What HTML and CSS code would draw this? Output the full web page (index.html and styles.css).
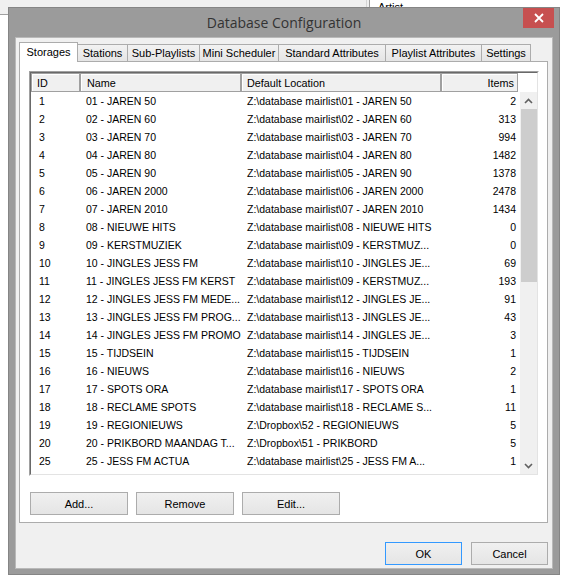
FILE: index.html
```html
<!DOCTYPE html>
<html>
<head>
<meta charset="utf-8">
<title>Database Configuration</title>
<link rel="stylesheet" href="styles.css">
</head>
<body>
<div class="app">
  <div class="app-head">
    <div class="app-left"></div>
    <div class="app-split"></div>
    <div class="app-right">Artist</div>
  </div>
</div>

<div class="window">
  <div class="titlebar">
    <span class="title">Database Configuration</span>
    <div class="close">
      <svg width="10" height="10" viewBox="0 0 10 10"><path d="M1 1 L9 9 M9 1 L1 9" stroke="#fff" stroke-width="1.8" fill="none"/></svg>
    </div>
  </div>
  <div class="client">
    <div class="tabs">
      <div class="tab active">Storages</div>
      <div class="tab">Stations</div>
      <div class="tab">Sub-Playlists</div>
      <div class="tab">Mini Scheduler</div>
      <div class="tab">Standard Attributes</div>
      <div class="tab">Playlist Attributes</div>
      <div class="tab">Settings</div>
    </div>
    <div class="panel">
      <div class="list">
        <div class="list-inner">
          <div class="list-head">
            <div class="hcell c-id">ID</div>
            <div class="hcell c-name">Name</div>
            <div class="hcell c-loc">Default Location</div>
            <div class="hcell c-items">Items</div>
          </div>
          <div class="list-body">
            <div class="rows">
              <div class="row"><span class="id">1</span><span class="name">01 - JAREN 50</span><span class="loc">Z:\database mairlist\01 - JAREN 50</span><span class="num">2</span></div>
              <div class="row"><span class="id">2</span><span class="name">02 - JAREN 60</span><span class="loc">Z:\database mairlist\02 - JAREN 60</span><span class="num">313</span></div>
              <div class="row"><span class="id">3</span><span class="name">03 - JAREN 70</span><span class="loc">Z:\database mairlist\03 - JAREN 70</span><span class="num">994</span></div>
              <div class="row"><span class="id">4</span><span class="name">04 - JAREN 80</span><span class="loc">Z:\database mairlist\04 - JAREN 80</span><span class="num">1482</span></div>
              <div class="row"><span class="id">5</span><span class="name">05 - JAREN 90</span><span class="loc">Z:\database mairlist\05 - JAREN 90</span><span class="num">1378</span></div>
              <div class="row"><span class="id">6</span><span class="name">06 - JAREN 2000</span><span class="loc">Z:\database mairlist\06 - JAREN 2000</span><span class="num">2478</span></div>
              <div class="row"><span class="id">7</span><span class="name">07 - JAREN 2010</span><span class="loc">Z:\database mairlist\07 - JAREN 2010</span><span class="num">1434</span></div>
              <div class="row"><span class="id">8</span><span class="name">08 - NIEUWE HITS</span><span class="loc">Z:\database mairlist\08 - NIEUWE HITS</span><span class="num">0</span></div>
              <div class="row"><span class="id">9</span><span class="name">09 - KERSTMUZIEK</span><span class="loc">Z:\database mairlist\09 - KERSTMUZ...</span><span class="num">0</span></div>
              <div class="row"><span class="id">10</span><span class="name">10 - JINGLES JESS FM</span><span class="loc">Z:\database mairlist\10 - JINGLES JE...</span><span class="num">69</span></div>
              <div class="row"><span class="id">11</span><span class="name">11 - JINGLES JESS FM KERST</span><span class="loc">Z:\database mairlist\09 - KERSTMUZ...</span><span class="num">193</span></div>
              <div class="row"><span class="id">12</span><span class="name">12 - JINGLES JESS FM MEDE...</span><span class="loc">Z:\database mairlist\12 - JINGLES JE...</span><span class="num">91</span></div>
              <div class="row"><span class="id">13</span><span class="name">13 - JINGLES JESS FM PROG...</span><span class="loc">Z:\database mairlist\13 - JINGLES JE...</span><span class="num">43</span></div>
              <div class="row"><span class="id">14</span><span class="name">14 - JINGLES JESS FM PROMO</span><span class="loc">Z:\database mairlist\14 - JINGLES JE...</span><span class="num">3</span></div>
              <div class="row"><span class="id">15</span><span class="name">15 - TIJDSEIN</span><span class="loc">Z:\database mairlist\15 - TIJDSEIN</span><span class="num">1</span></div>
              <div class="row"><span class="id">16</span><span class="name">16 - NIEUWS</span><span class="loc">Z:\database mairlist\16 - NIEUWS</span><span class="num">2</span></div>
              <div class="row"><span class="id">17</span><span class="name">17 - SPOTS ORA</span><span class="loc">Z:\database mairlist\17 - SPOTS ORA</span><span class="num">1</span></div>
              <div class="row"><span class="id">18</span><span class="name">18 - RECLAME SPOTS</span><span class="loc">Z:\database mairlist\18 - RECLAME S...</span><span class="num">11</span></div>
              <div class="row"><span class="id">19</span><span class="name">19 - REGIONIEUWS</span><span class="loc">Z:\Dropbox\52 - REGIONIEUWS</span><span class="num">5</span></div>
              <div class="row"><span class="id">20</span><span class="name">20 - PRIKBORD MAANDAG T...</span><span class="loc">Z:\Dropbox\51 - PRIKBORD</span><span class="num">5</span></div>
              <div class="row"><span class="id">25</span><span class="name">25 - JESS FM ACTUA</span><span class="loc">Z:\database mairlist\25 - JESS FM A...</span><span class="num">1</span></div>
              <div class="row"><span class="id"></span><span class="name"></span><span class="loc">Z:\database mairlist</span><span class="num"></span></div>
            </div>
            <div class="vscroll">
              <div class="sb-btn">
                <svg width="9" height="6" viewBox="0 0 9 6"><path d="M1 5 L4.5 1.5 L8 5" stroke="#606060" stroke-width="1.6" fill="none"/></svg>
              </div>
              <div class="sb-thumb"></div>
              <div class="sb-track"></div>
              <div class="sb-btn">
                <svg width="9" height="6" viewBox="0 0 9 6"><path d="M1 1 L4.5 4.5 L8 1" stroke="#606060" stroke-width="1.6" fill="none"/></svg>
              </div>
            </div>
          </div>
        </div>
      </div>
      <div class="btn-row">
        <button class="btn">Add...</button>
        <button class="btn">Remove</button>
        <button class="btn">Edit...</button>
      </div>
    </div>
    <div class="dialog-buttons">
      <button class="btn btn-dlg btn-default">OK</button>
      <button class="btn btn-dlg">Cancel</button>
    </div>
  </div>
</div>
</body>
</html>
```

FILE: styles.css
```css
html, body {
  margin: 0;
  padding: 0;
}

body {
  width: 567px;
  height: 582px;
  overflow: hidden;
  position: relative;
  background: #fff;
  font-family: "Liberation Sans", Arial, sans-serif;
  font-size: 11px;
  color: #000;
}

/* background application */
.app {
  height: 582px;
}

.app-head {
  display: flex;
  height: 15px;
}

.app-left {
  width: 366px;
  box-sizing: border-box;
  background: #f0f0f0;
  border-bottom: 1px solid #a0a0a0;
}

.app-split {
  width: 2px;
  background: #f0f0f0;
  border-left: 1px solid #d5d5d5;
  border-right: 1px solid #a0a0a0;
}

.app-right {
  flex: 1;
  background: #fff;
  padding: 1px 0 0 8px;
  font-size: 11px;
}

/* dialog window */
.window {
  position: absolute;
  left: 8px;
  top: 7px;
  width: 552px;
  height: 568px;
  box-sizing: border-box;
  background: #9b9b9b;
  border: 1px solid #858585;
  padding: 0 6px 6px;
  display: flex;
  flex-direction: column;
}

.titlebar {
  height: 29px;
  flex: none;
  position: relative;
  display: flex;
  align-items: center;
  justify-content: center;
}

.title {
  font-family: "Open Sans", "Noto Sans", sans-serif;
  font-size: 14px;
  color: #333;
  margin-top: 0;
}

.close {
  position: absolute;
  right: -1px;
  top: 0;
  width: 31px;
  height: 20px;
  background: #c75050;
  display: flex;
  align-items: center;
  justify-content: center;
}

.client {
  flex: 1;
  background: #f0f0f0;
  border: 1px solid #b9b9b9;
  padding: 4px 4px 3px 3px;
  display: flex;
  flex-direction: column;
}

/* tabs */
.tabs {
  display: flex;
  height: 20px;
  flex: none;
  align-items: flex-start;
}

.tab {
  box-sizing: border-box;
  height: 17px;
  margin-top: 2px;
  border: 1px solid #acacac;
  border-left: none;
  border-bottom: none;
  background: linear-gradient(#f2f2f2, #e5e5e5);
  display: flex;
  align-items: center;
  justify-content: center;
  white-space: nowrap;
}

.tab.active {
  height: 20px;
  margin-top: 0;
  border-left: 1px solid #acacac;
  background: #fff;
  position: relative;
  z-index: 1;
  padding-bottom: 2px;
}

.tab:nth-child(1) { width: 59px; }
.tab:nth-child(2) { width: 50px; }
.tab:nth-child(3) { width: 72px; }
.tab:nth-child(4) { width: 79px; }
.tab:nth-child(5) { width: 107px; }
.tab:nth-child(6) { width: 96px; }
.tab:nth-child(7) { width: 49px; }

.panel {
  margin-top: -1px;
  height: 462px;
  flex: none;
  box-sizing: border-box;
  border: 1px solid #acacac;
  background: #fff;
  padding: 9px 8px 0 9px;
}

/* list view */
.list {
  height: 405px;
  box-sizing: border-box;
  border: 1px solid;
  border-color: #a0a0a0 #fff #fff #a0a0a0;
}

.list-inner {
  height: 100%;
  box-sizing: border-box;
  border: 1px solid;
  border-color: #696969 #e3e3e3 #e3e3e3 #696969;
  display: flex;
  flex-direction: column;
}

.list-head {
  display: flex;
  height: 19px;
  flex: none;
}

.hcell {
  box-sizing: border-box;
  height: 19px;
  border: 1px solid #a0a0a0;
  box-shadow: inset 1px 1px 0 #fff;
  background: #f0f0f0;
  display: flex;
  align-items: center;
  padding: 0 3px 0 5px;
  white-space: nowrap;
  font-size: 10.8px;
}

.c-id { width: 49px; }
.c-name { width: 161px; padding-left: 6px; }
.c-loc { width: 200px; }
.c-items { width: 77px; justify-content: flex-end; }

.list-body {
  flex: 1;
  display: flex;
  min-height: 0;
}

.rows {
  flex: 1;
  overflow: hidden;
}

.row {
  display: grid;
  grid-template-columns: 49px 161px 200px 77px;
  height: 18px;
  line-height: 18px;
  white-space: nowrap;
  font-size: 10.5px;
}

.row span {
  overflow: hidden;
}

.id { padding-left: 8px; }
.name { padding-left: 6px; }
.loc { padding-left: 6px; }
.num { text-align: right; padding-right: 2px; }

.vscroll {
  width: 17px;
  flex: none;
  background: #f0f0f0;
  display: flex;
  flex-direction: column;
}

.sb-btn {
  height: 17px;
  flex: none;
  display: flex;
  align-items: center;
  justify-content: center;
}

.sb-thumb {
  height: 173px;
  flex: none;
  margin: 0 0 0 1px;
  background: #cdcdcd;
}

.sb-track {
  flex: 1;
}

/* buttons */
.btn-row {
  display: flex;
  gap: 8px;
  margin-top: 16px;
  padding-left: 1px;
}

.btn {
  width: 98px;
  height: 23px;
  box-sizing: border-box;
  border: 1px solid #acacac;
  background: linear-gradient(#f0f0f0, #e5e5e5);
  font-family: "Liberation Sans", Arial, sans-serif;
  font-size: 11px;
  color: #000;
  padding: 0;
  margin: 0;
}

.dialog-buttons {
  display: flex;
  justify-content: flex-end;
  gap: 9px;
  margin-top: 19px;
}

.btn-dlg {
  width: 77px;
}

.btn-default {
  border-color: #3399ff;
}
```
